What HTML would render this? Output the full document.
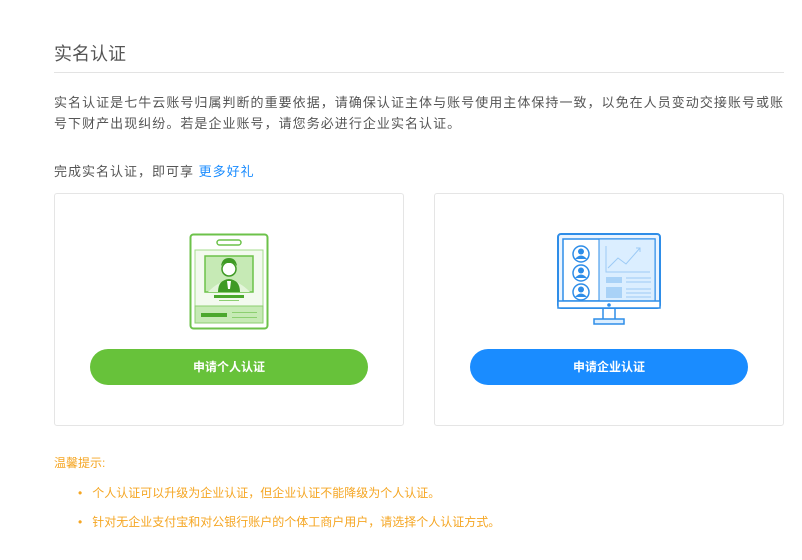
<!DOCTYPE html>
<html><head><meta charset="utf-8"><style>
body{margin:0;width:802px;height:560px;background:#fff;font-family:"Liberation Sans","Noto Sans CJK SC",sans-serif;color:#555;position:relative;overflow:hidden}
.a{position:absolute;white-space:nowrap}
.card{position:absolute;top:193px;width:350px;height:233px;border:1px solid #e5e5e5;border-radius:3px;box-sizing:border-box}
.btn{position:absolute;top:349px;width:278px;height:36px;border-radius:18px;color:#fff;font-size:12px;font-weight:bold;text-align:center;line-height:36px}
.note{color:#f5a623;font-size:12px}
</style></head><body>
<div class="a" style="left:54px;top:40px;font-size:18px;color:#555">实名认证</div>
<div class="a" style="left:54px;top:72px;width:730px;height:1px;background:#e3e3e3"></div>
<div class="a" style="left:54px;top:92px;font-size:13px;line-height:21px;color:#555;letter-spacing:1.04px">实名认证是七牛云账号归属判断的重要依据，请确保认证主体与账号使用主体保持一致，以免在人员变动交接账号或账<br>号下财产出现纠纷。若是企业账号，请您务必进行企业实名认证。</div>
<div class="a" style="left:54px;top:163px;font-size:13px;line-height:18px;letter-spacing:1px">完成实名认证，即可享 <span style="color:#1a8cff">更多好礼</span></div>
<div class="card" style="left:54px"></div>
<div class="card" style="left:434px"></div>
<svg class="a" style="left:188px;top:232px" width="82" height="100" viewBox="0 0 82 100">
<rect x="2.5" y="2.5" width="77" height="94" rx="3" fill="#fff" stroke="#6cc24a" stroke-width="2"/>
<rect x="29" y="8" width="24" height="5" rx="2.5" fill="none" stroke="#6cc24a" stroke-width="1.5"/>
<rect x="7" y="18" width="68" height="73" fill="#f3faef" stroke="#a5dc8c"/>
<rect x="17" y="24" width="48" height="36" fill="#c6eab5" stroke="#6cc24a" stroke-width="1.5"/>
<path d="M20 60 Q41 38 62 60Z" fill="#e3f5da"/>
<circle cx="41" cy="37" r="7" fill="#fff" stroke="#3e9a24" stroke-width="1.5"/>
<path d="M33 34 Q34 26 41 26 Q48 26 49 34 L46 31 L36 31Z" fill="#3e9a24"/>
<path d="M30 60 Q30 48 41 47 Q52 48 52 60Z" fill="#3e9a24"/>
<path d="M39 49 L43 49 L42 57 L40 57Z" fill="#fff"/>
<rect x="26" y="63" width="30" height="3" fill="#4ba82d"/>
<rect x="31" y="68" width="20" height="1" fill="#8ccf70"/>
<rect x="7" y="74" width="68" height="17" fill="#c6eab5" stroke="#8ccf70"/>
<rect x="13" y="81" width="26" height="4" fill="#4ba82d"/>
<rect x="44" y="80" width="25" height="1" fill="#8ccf70"/><rect x="44" y="85" width="25" height="1" fill="#8ccf70"/>
</svg>
<svg class="a" style="left:556px;top:232px" width="106" height="100" viewBox="0 0 106 100">
<rect x="2" y="2" width="102" height="74" rx="3" fill="#eaf4ff" stroke="#2e8de8" stroke-width="2"/>
<rect x="7" y="7" width="92" height="62" fill="#fff" stroke="#2e8de8" stroke-width="1.5"/>
<rect x="43" y="7" width="56" height="62" fill="#dbeeff" stroke="#2e8de8" stroke-width="1"/>
<g fill="#fff" stroke="#2e8de8" stroke-width="1.5"><circle cx="25" cy="22" r="8"/><circle cx="25" cy="41" r="8"/><circle cx="25" cy="60" r="8"/></g>
<g fill="#2e8de8"><circle cx="25" cy="19.5" r="3"/><path d="M19 27 Q25 20 31 27Z"/><circle cx="25" cy="38.5" r="3"/><path d="M19 46 Q25 39 31 46Z"/><circle cx="25" cy="57.5" r="3"/><path d="M19 65 Q25 58 31 65Z"/></g>
<path d="M50 14 V40 H94 M52 36 L62 26 L70 32 L84 16 M80 16 H84 V20" fill="none" stroke="#9ccaf5" stroke-width="1"/>
<rect x="50" y="45" width="16" height="6" fill="#a9d2f7"/><rect x="50" y="55" width="16" height="11" fill="#a9d2f7"/>
<g stroke="#9ccaf5"><path d="M70 46H95M70 50H95M70 57H95M70 61H95M70 65H95"/></g>
<rect x="2" y="69" width="102" height="7" fill="#fff" stroke="#2e8de8" stroke-width="1.5"/>
<circle cx="53" cy="73" r="1.8" fill="#2e8de8"/>
<path d="M47 77 V87 M59 77 V87" stroke="#2e8de8" stroke-width="1.5"/>
<rect x="38" y="87" width="30" height="5" fill="#dbeeff" stroke="#2e8de8" stroke-width="1.5"/>
</svg>
<div class="btn" style="left:90px;background:#67c23a">申请个人认证</div>
<div class="btn" style="left:470px;background:#1a8cff">申请企业认证</div>
<div class="a note" style="left:54px;top:454px">温馨提示:</div>
<div class="a note" style="left:78px;top:484px">•&nbsp;&nbsp;&nbsp;个人认证可以升级为企业认证，但企业认证不能降级为个人认证。</div>
<div class="a note" style="left:78px;top:513px">•&nbsp;&nbsp;&nbsp;针对无企业支付宝和对公银行账户的个体工商户用户，请选择个人认证方式。</div>
</body></html>
